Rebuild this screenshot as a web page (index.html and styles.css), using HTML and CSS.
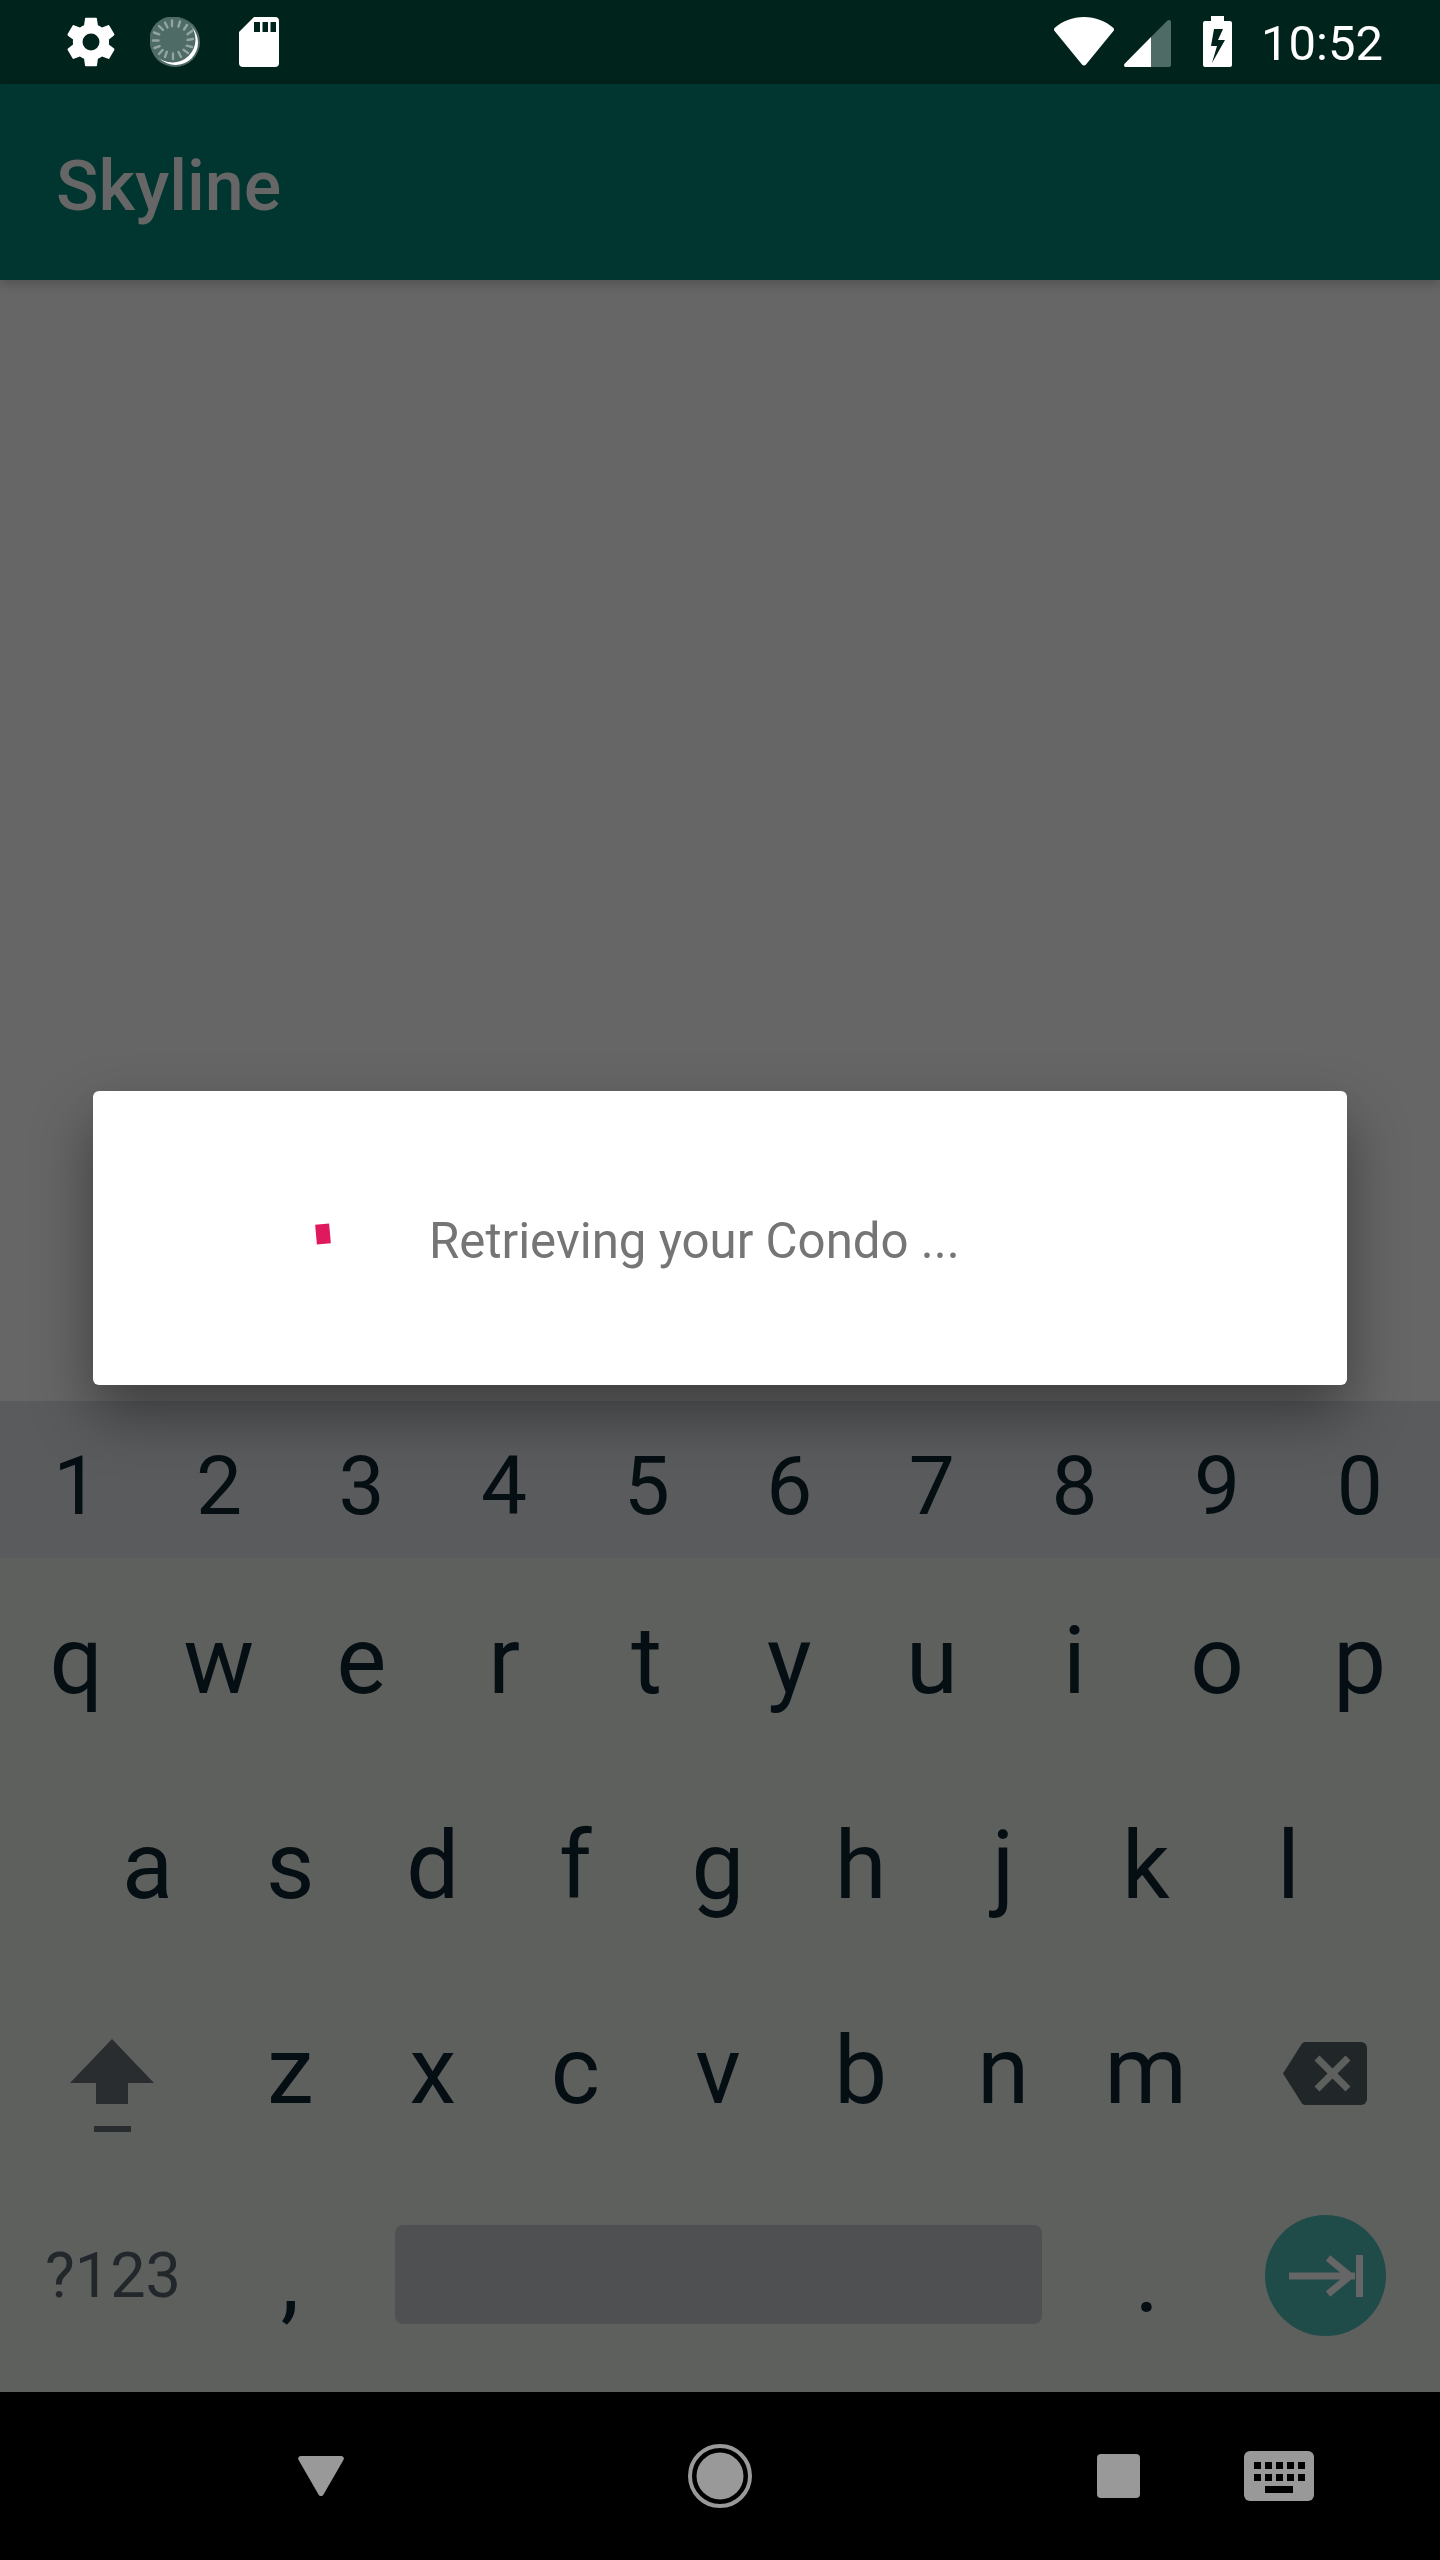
FILE: index.html
```html
<!DOCTYPE html>
<html lang="en">
<head>
  <meta charset="UTF-8">
  <title>Skyline</title>
  <link rel="stylesheet" href="styles.css">
</head>
<body>
  <div class="phone">

    <div class="statusbar">
      <div class="status-left">
        <svg class="ic-gear" viewBox="0 0 24 24"><path fill="#fff" fill-rule="evenodd" d="M19.4 13c.04-.32.07-.65.07-1s-.03-.68-.07-1l2.11-1.65c.19-.15.24-.42.12-.64l-2-3.46c-.12-.22-.39-.3-.61-.22l-2.49 1c-.52-.4-1.08-.73-1.69-.98l-.38-2.65C14.46 2.18 14.25 2 14 2h-4c-.25 0-.46.18-.49.42l-.38 2.65c-.61.25-1.17.59-1.69.98l-2.49-1c-.23-.09-.49 0-.61.22l-2 3.46c-.13.22-.07.49.12.64L4.57 11c-.04.32-.07.66-.07 1s.03.68.07 1l-2.11 1.65c-.19.15-.24.42-.12.64l2 3.46c.12.22.39.3.61.22l2.49-1c.52.4 1.08.73 1.69.98l.38 2.65c.03.24.24.42.49.42h4c.25 0 .46-.18.49-.42l.38-2.65c.61-.25 1.17-.59 1.69-.98l2.49 1c.23.09.49 0 .61-.22l2-3.46c.12-.22.07-.49-.12-.64L19.4 13zM12 15.5a3.5 3.5 0 1 1 0-7 3.5 3.5 0 0 1 0 7z"/></svg>
        <svg class="ic-sync" viewBox="0 0 50 50">
          <circle cx="25" cy="25" r="25" fill="#4f6b65"/>
          <circle cx="25.500" cy="25.500" r="22.500" fill="#fff"/>
          <circle cx="22.500" cy="22.500" r="23" fill="#4f6b65"/>
          <g stroke="#93a5a0" stroke-width="2.400" stroke-linecap="round">
            <path d="M22 3.500v5.500M30 4.500l-1.600 5.200M37 8l-3 4.500M42 14l-4.500 3.200M43 22l-5.500 1M42 30l-5.300-1.300M38 36l-4.500-3.200M31 40l-2.500-5M23 42v-5.500M15 40l1.800-5.200M9 37l3.600-4M4.500 31l5.200-1.800M3 23.500h5.500M4 15.500l5.200 1.800M9 9l4 3.800M15 5.500l2.500 5"/>
          </g>
        </svg>
        <svg class="ic-sd" viewBox="0 0 40 50"><path fill="#fff" d="M15 0h21a4 4 0 0 1 4 4v42a4 4 0 0 1-4 4H4a4 4 0 0 1-4-4V15z"/><path fill="#00231c" d="M15 5h6v10h-6zM23.500 5h5.500v10h-5.500zM31.500 5h5.500v10h-5.500z"/></svg>
      </div>
      <div class="status-right">
        <svg class="ic-wifi" viewBox="0 0 60 49"><path fill="#fff" d="M30 0c11.500 0 21.700 4.300 29.200 10.700 1 .9 1.100 2.400.2 3.400L32 47.500c-1.100 1.300-2.900 1.300-4 0L.6 14.100c-.9-1-.8-2.500.2-3.400C8.300 4.300 18.500 0 30 0z"/></svg>
        <svg class="ic-signal" viewBox="0 0 47 47"><path fill="#4f6b65" d="M27 17 43.500.5C45 -.6 47 0 47 2v43a2 2 0 0 1-2 2H27z"/><path fill="#fff" d="M27 17v30H2c-1.800 0-2.600-2-1.400-3.200z"/></svg>
        <svg class="ic-batt" viewBox="0 0 29 51"><path fill="#fff" fill-rule="evenodd" d="M8 0h13v5h6a2 2 0 0 1 2 2v42a2 2 0 0 1-2 2H2a2 2 0 0 1-2-2V7a2 2 0 0 1 2-2h6zM11 13 8 30h6l-5 17 13-23h-7l5-11z"/></svg>
        <span class="clock">10:52</span>
      </div>
    </div>

    <div class="appbar">
      <span class="app-title">Skyline</span>
    </div>

    <div class="content"></div>

    <div class="keyboard">
      <div class="kb-row row-num">
        <span class="key">1</span><span class="key">2</span><span class="key">3</span><span class="key">4</span><span class="key">5</span>
        <span class="key">6</span><span class="key">7</span><span class="key">8</span><span class="key">9</span><span class="key">0</span>
      </div>
      <div class="kb-row row-q">
        <span class="key">q</span><span class="key">w</span><span class="key">e</span><span class="key">r</span><span class="key">t</span>
        <span class="key">y</span><span class="key">u</span><span class="key">i</span><span class="key">o</span><span class="key">p</span>
      </div>
      <div class="kb-row row-a">
        <span class="key">a</span><span class="key">s</span><span class="key">d</span><span class="key">f</span><span class="key">g</span>
        <span class="key">h</span><span class="key">j</span><span class="key">k</span><span class="key">l</span>
      </div>
      <div class="kb-row row-z">
        <span class="key key-wide">
          <svg class="ic-shift" viewBox="0 0 84 93"><path fill="#292d30" d="M42 0 84 44H58V65H26V44H0z"/><path fill="#292d30" d="M24 87h37v6H24z"/></svg>
        </span>
        <span class="key">z</span><span class="key">x</span><span class="key">c</span><span class="key">v</span>
        <span class="key">b</span><span class="key">n</span><span class="key">m</span>
        <span class="key key-wide">
          <svg class="ic-back" viewBox="0 0 84 63"><path fill="#212629" d="M22 0h56a6 6 0 0 1 6 6v51a6 6 0 0 1-6 6H22a4 4 0 0 1-3-1.500L0 31.500 19 1.500A4 4 0 0 1 22 0z"/><path stroke="#5e605e" stroke-width="7" d="M34 16l31 31M65 16 34 47"/></svg>
        </span>
      </div>
      <div class="kb-row row-bottom">
        <span class="key key-sym">?123</span>
        <span class="key key-punct">,</span>
        <span class="spacebar"></span>
        <span class="key key-punct">.</span>
        <span class="key key-action">
          <span class="action-btn">
            <svg class="ic-tab" viewBox="0 0 74 42"><path fill="none" stroke="#666" stroke-width="7" d="M0 21h66M39 3l22 18-22 18M70.500 0v42"/></svg>
          </span>
        </span>
      </div>
    </div>

    <div class="navbar">
      <svg class="ic-nav-back" viewBox="0 0 46 40"><path fill="#999" d="M3 0h40c2.400 0 3.500 2 2.400 4L25.500 38.500c-1.200 2-3.800 2-5 0L.6 4C-.5 2 .6 0 3 0z"/></svg>
      <svg class="ic-nav-home" viewBox="0 0 64 64"><circle cx="32" cy="32" r="30" fill="none" stroke="#999" stroke-width="4"/><circle cx="32" cy="32" r="23.500" fill="#999"/></svg>
      <span class="nav-square"></span>
      <svg class="ic-nav-kbd" viewBox="0 0 70 50">
        <path fill="#999" d="M6 0h58a6 6 0 0 1 6 6v38a6 6 0 0 1-6 6H6a6 6 0 0 1-6-6V6a6 6 0 0 1 6-6z"/>
        <path fill="#000" d="M10 11h7v7h-7zM21 11h7v7h-7zM32 11h7v7h-7zM43 11h7v7h-7zM54 11h7v7h-7zM10 23h7v7h-7zM21 23h7v7h-7zM32 23h7v7h-7zM43 23h7v7h-7zM54 23h7v7h-7zM21 35h28v7H21z"/>
      </svg>
    </div>

    <div class="dialog">
      <span class="spinner"></span>
      <span class="dialog-msg">Retrieving your Condo ...</span>
    </div>
  </div>
</body>
</html>
```

FILE: styles.css
```css
* { box-sizing: border-box; }
html, body { margin: 0; padding: 0; }
body { font-family: Roboto, "Liberation Sans", sans-serif; background: #000; }

.phone { position: relative; width: 1440px; height: 2560px; display: flex; flex-direction: column; overflow: hidden; background: #666; }

/* status bar */
.statusbar { height: 84px; flex: none; background: #00231c; display: flex; justify-content: space-between; padding: 17px 57px 0 66px; }
.status-left, .status-right { display: flex; align-items: flex-start; }
.ic-gear { width: 58px; height: 58px; margin: -4px 0 0 -4px; }
.ic-sync { width: 50px; height: 50px; margin-left: 30px; }
.ic-sd { width: 40px; height: 50px; margin-left: 39px; }
.ic-wifi { width: 60px; height: 49px; }
.ic-signal { width: 47px; height: 47px; margin: 3px 0 0 10px; }
.ic-batt { width: 29px; height: 51px; margin: -1px 0 0 32px; }
.clock { color: #fff; font-size: 49px; line-height: 54px; margin: 0 0 0 29px; }

/* app bar */
.appbar { height: 196px; flex: none; background: #003530; padding-left: 56px; display: flex; align-items: center; position: relative; z-index: 1; box-shadow: 0 4px 10px rgba(0,0,0,.2); }
.app-title { color: #666; font-size: 70px; font-weight: 500; line-height: 1; margin-top: 8px; }

.content { flex: 1; }

/* keyboard */
.keyboard { height: 991px; flex: none; background: #5e605e; }
.kb-row { display: flex; justify-content: center; align-items: center; color: #050e12; }
.row-num { height: 157px; background: #595b5d; padding: 12px 4px 0 0; }
.row-q, .row-a, .row-z { height: 205px; padding-right: 4px; }
.row-bottom { height: 219px; padding-bottom: 14px; }
.key { width: 142.6px; flex: none; text-align: center; font-size: 94px; line-height: 1; }
.row-num .key { font-size: 82px; }
.key-wide { width: 221px; display: flex; justify-content: center; }
.key-sym { width: 226px; font-size: 63px; color: #21272b; }
.key-punct { width: 128px; margin-top: 6px; }
.key-action { width: 229px; display: flex; justify-content: center; }

.spacebar { width: 647px; height: 99px; flex: none; margin: -3px 41px 0; background: #4f5052; border-radius: 8px; }
.action-btn { width: 121px; height: 121px; border-radius: 50%; background: #1f4b48; display: flex; align-items: center; justify-content: center; }
.ic-shift { width: 84px; height: 93px; margin: 30px 0 0 7px; }
.ic-back { width: 84px; height: 63px; margin: 6px 6px 0 0; }
.ic-tab { width: 74px; height: 42px; }

/* nav bar */
.navbar { height: 168px; flex: none; background: #000; position: relative; display: flex; align-items: center; padding-left: 298px; }
.ic-nav-back { width: 46px; height: 40px; }
.ic-nav-home { width: 64px; height: 64px; margin-left: 344px; }
.nav-square { width: 43px; height: 44px; background: #999; border-radius: 4px; margin-left: 345px; }
.ic-nav-kbd { width: 70px; height: 50px; margin-left: 104px; }

/* progress dialog, floats over page and keyboard */
.dialog { position: absolute; left: 93px; top: 1091px; width: 1254px; height: 294px; background: #fff; border-radius: 6px; display: flex; align-items: center; padding-left: 223px; box-shadow: 0 28px 60px rgba(0,0,0,.4); }
.spinner { width: 14px; height: 20px; background: #e0195f; transform: rotate(-5deg); margin-top: -8px; }
.dialog-msg { color: #757575; font-size: 49.2px; margin-left: 99px; line-height: 1; margin-top: 7px; }
```
